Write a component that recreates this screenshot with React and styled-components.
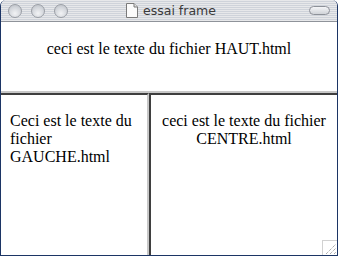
import styled, { createGlobalStyle } from "styled-components";

const Global = createGlobalStyle`
  html, body { margin: 0; padding: 0; background: #ffffff; }
  body { width: 338px; height: 256px; overflow: hidden; }
`;

const Window = styled.div`
  width: 338px;
  height: 256px;
  box-sizing: border-box;
  display: flex;
  flex-direction: column;
  background: #ffffff;
  border: 1px solid #1c3565;
  border-top: none;
  border-radius: 6px 6px 0 0;
  overflow: hidden;
`;

const TitleBar = styled.div`
  height: 22px;
  flex: none;
  display: flex;
  align-items: center;
  position: relative;
  padding: 0 8px;
  box-sizing: border-box;
  background: repeating-linear-gradient(
    to bottom,
    #e7e8ea 0px,
    #e7e8ea 1px,
    #cfd3da 1px,
    #cfd3da 2px
  );
  border-bottom: 1px solid #8f939a;
  margin: 0 -1px;
`;

const Lights = styled.div`
  display: flex;
  gap: 9px;
`;

const Light = styled.span`
  width: 14px;
  height: 14px;
  box-sizing: border-box;
  border-radius: 50%;
  border: 1px solid #9a9ea5;
  background: radial-gradient(circle at 50% 70%, #f2f3f5 0%, #d4d7dc 55%, #b6bac1 100%);
`;

const Title = styled.div`
  position: absolute;
  left: 0;
  right: 0;
  top: 0;
  bottom: 0;
  display: flex;
  align-items: center;
  justify-content: center;
  gap: 5px;
  font-family: "DejaVu Sans", "Liberation Sans", sans-serif;
  font-size: 12.5px;
  color: #3a3a3a;
  pointer-events: none;
  padding-left: 4px;
`;

const Pill = styled.span`
  margin-left: auto;
  width: 21px;
  height: 9px;
  box-sizing: border-box;
  border-radius: 5px;
  border: 1px solid #8d9198;
  background: linear-gradient(to bottom, #f4f5f7, #d0d3d8);
`;

const Frames = styled.div`
  flex: 1;
  display: flex;
  flex-direction: column;
  font-family: "Liberation Serif", "Times New Roman", serif;
  font-size: 16px;
  color: #000000;
`;

const TopFrame = styled.div`
  height: 69px;
  flex: none;
  border-bottom: 2px solid #c8c8c8;
  text-align: center;
`;

const Row = styled.div`
  flex: 1;
  display: flex;
  min-height: 0;
`;

const Pane = styled.div`
  box-sizing: border-box;
  border-top: 2px solid #3f3f3f;
  text-align: ${(p) => (p.$center ? "center" : "left")};
  position: relative;
`;

const LeftPane = styled(Pane)`
  width: 148px;
  flex: none;
  border-right: 2px solid #c8c8c8;
  padding: 0 8px 0 9px;
`;

const RightPane = styled(Pane)`
  flex: 1;
  border-left: 2px solid #3f3f3f;
  padding: 0 8px;
`;

const Text = styled.p`
  margin: 0;
  padding-top: ${(p) => p.$top}px;
  line-height: 18px;
`;

const Grip = styled.div`
  position: absolute;
  right: 0;
  bottom: 0;
  width: 15px;
  height: 15px;
  box-sizing: border-box;
  border-top: 1px solid #d2d2d2;
  border-left: 1px solid #d2d2d2;
  background: #ffffff;
`;

const DocIcon = () => (
  <svg width="12" height="15" viewBox="0 0 12 15">
    <path d="M0.5 0.5 H8 L11.5 4 V14.5 H0.5 Z" fill="#fbfbfb" stroke="#7a7a7a" />
    <path d="M8 0.5 V4 H11.5" fill="#e3e3e3" stroke="#7a7a7a" />
  </svg>
);

const GripLines = () => (
  <svg width="14" height="14" viewBox="0 0 14 14" style={{ display: "block" }}>
    <path d="M3 13 L13 3 M7 13 L13 7 M11 13 L13 11" stroke="#8a8a8a" strokeWidth="1" strokeDasharray="1 1" />
  </svg>
);

const App = () => {
  return (
    <>
      <Global />
      <Window>
        <TitleBar>
          <Lights>
            <Light />
            <Light />
            <Light />
          </Lights>
          <Title>
            <DocIcon />
            <span>essai frame</span>
          </Title>
          <Pill />
        </TitleBar>
        <Frames>
          <TopFrame>
            <Text $top={18}>ceci est le texte du fichier HAUT.html</Text>
          </TopFrame>
          <Row>
            <LeftPane>
              <Text $top={17}>Ceci est le texte du fichier GAUCHE.html</Text>
            </LeftPane>
            <RightPane $center>
              <Text $top={17}>ceci est le texte du fichier CENTRE.html</Text>
              <Grip>
                <GripLines />
              </Grip>
            </RightPane>
          </Row>
        </Frames>
      </Window>
    </>
  );
};

export default App;
